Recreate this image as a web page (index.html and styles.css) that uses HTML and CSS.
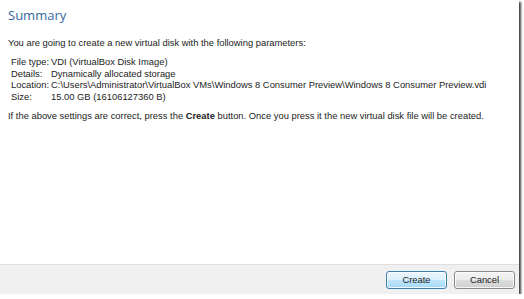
FILE: index.html
```html
<!DOCTYPE html>
<html>
<head>
<meta charset="utf-8">
<link rel="stylesheet" href="styles.css">
</head>
<body>
<div class="window">
  <div class="content">
    <h1 class="title">Summary</h1>
    <p class="intro">You are going to create a new virtual disk with the following parameters:</p>
    <div class="params">
      <span class="label">File type:</span><span class="value">VDI (VirtualBox Disk Image)</span>
      <span class="label">Details:</span><span class="value">Dynamically allocated storage</span>
      <span class="label">Location:</span><span class="value">C:\Users\Administrator\VirtualBox VMs\Windows 8 Consumer Preview\Windows 8 Consumer Preview.vdi</span>
      <span class="label">Size:</span><span class="value">15.00 GB (16106127360 B)</span>
    </div>
    <p class="note">If the above settings are correct, press the <b>Create</b> button. Once you press it the new virtual disk file will be created.</p>
  </div>
  <div class="footer">
    <button class="btn btn-default">Create</button>
    <button class="btn">Cancel</button>
  </div>
</div>
</body>
</html>
```

FILE: styles.css
```css
html, body {
  margin: 0;
  padding: 0;
  background: #ffffff;
}
body {
  font-family: "Liberation Sans", Arial, sans-serif;
  font-size: 9.4px;
  color: #1c1c1c;
}
.window {
  width: 519px;
  height: 294px;
  display: flex;
  flex-direction: column;
  background: #ffffff;
  box-shadow: 2px 2px 2px rgba(0, 0, 0, 0.75);
}
.content {
  flex: 1;
  padding: 5px 8px 0 8px;
}
.title {
  margin: 0;
  font-family: "Open Sans", "Noto Sans", sans-serif;
  font-weight: normal;
  font-size: 13px;
  line-height: 20px;
  color: #35689f;
}
.intro {
  margin: 12px 0 0 0;
  line-height: 11px;
}
.params {
  margin: 8px 0 0 3px;
  display: grid;
  grid-template-columns: 40px auto;
  line-height: 11.5px;
}
.note {
  margin: 8px 0 0 0;
  line-height: 11px;
}
.note b {
  font-weight: bold;
}
.footer {
  height: 29px;
  border-top: 1px solid #dfdfdf;
  background: #f0f0f0;
  display: flex;
  justify-content: flex-end;
  align-items: center;
  gap: 7px;
  padding-right: 4px;
}
.btn {
  width: 61px;
  height: 18px;
  padding: 0;
  font-family: "Liberation Sans", Arial, sans-serif;
  font-size: 9.4px;
  color: #1c1c1c;
  border: 1px solid #8a8a8a;
  border-radius: 3px;
  background: linear-gradient(#f4f4f4 0%, #ebebeb 50%, #dddddd 51%, #cfcfcf 100%);
  box-shadow: inset 0 0 0 1px rgba(255, 255, 255, 0.8);
}
.btn-default {
  border-color: #3c7fb1;
  background: linear-gradient(#eaf6fd 0%, #d9f0fc 50%, #bee6fd 51%, #a7d9f5 100%);
}
```
